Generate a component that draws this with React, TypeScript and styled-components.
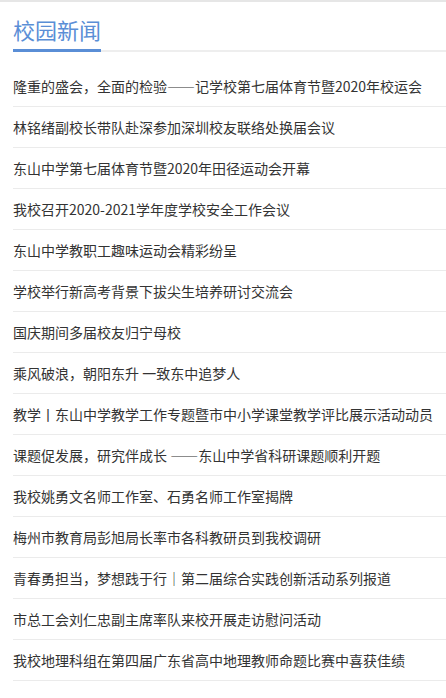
import React from 'react';
import styled, { createGlobalStyle } from 'styled-components';

const GlobalStyle = createGlobalStyle`
  body {
    margin: 0;
    background: #fff;
    font-family: "Microsoft YaHei", "Noto Sans CJK SC", "Noto Sans", sans-serif;
  }
`;

const Panel = styled.div`
  border-top: 2px solid #e6e6e6;
  padding-left: 13px;
  background: #fff;
`;

const Header = styled.div`
  display: flex;
  border-bottom: 2px solid #eeeeee;
  padding-top: 11px;
`;

const Title = styled.h2`
  margin: 0 0 -2px 0;
  font-size: 22px;
  font-weight: normal;
  line-height: 32px;
  color: #5a8ed6;
  padding-bottom: 4px;
  border-bottom: 3px solid #5a8ed6;
`;

const List = styled.ul`
  list-style: none;
  margin: 0;
  padding: 14px 0 0 0;
`;

const Item = styled.li`
  height: 40px;
  line-height: 40px;
  border-bottom: 1px solid #ebebeb;
  font-size: 14px;
  color: #333;
  white-space: nowrap;
  overflow: hidden;
`;

// full-width dashes, as the original font draws them
const Wide = styled.span`
  font-feature-settings: "fwid";
`;

const news = [
  '隆重的盛会，全面的检验——记学校第七届体育节暨2020年校运会',
  '林铭绪副校长带队赴深参加深圳校友联络处换届会议',
  '东山中学第七届体育节暨2020年田径运动会开幕',
  '我校召开2020-2021学年度学校安全工作会议',
  '东山中学教职工趣味运动会精彩纷呈',
  '学校举行新高考背景下拔尖生培养研讨交流会',
  '国庆期间多届校友归宁母校',
  '乘风破浪，朝阳东升 一致东中追梦人',
  '教学丨东山中学教学工作专题暨市中小学课堂教学评比展示活动动员',
  '课题促发展，研究伴成长 ——东山中学省科研课题顺利开题',
  '我校姚勇文名师工作室、石勇名师工作室揭牌',
  '梅州市教育局彭旭局长率市各科教研员到我校调研',
  '青春勇担当，梦想践于行｜第二届综合实践创新活动系列报道',
  '市总工会刘仁忠副主席率队来校开展走访慰问活动',
  '我校地理科组在第四届广东省高中地理教师命题比赛中喜获佳绩',
];

function renderTitle(text: string) {
  const parts = text.split('——');
  return parts.map((p, i) => (
    <React.Fragment key={i}>
      {i > 0 && <Wide>——</Wide>}
      {p}
    </React.Fragment>
  ));
}

export default function App() {
  return (
    <>
      <GlobalStyle />
      <Panel>
        <Header>
          <Title>校园新闻</Title>
        </Header>
        <List>
          {news.map((n) => (
            <Item key={n}>{renderTitle(n)}</Item>
          ))}
        </List>
      </Panel>
    </>
  );
}
